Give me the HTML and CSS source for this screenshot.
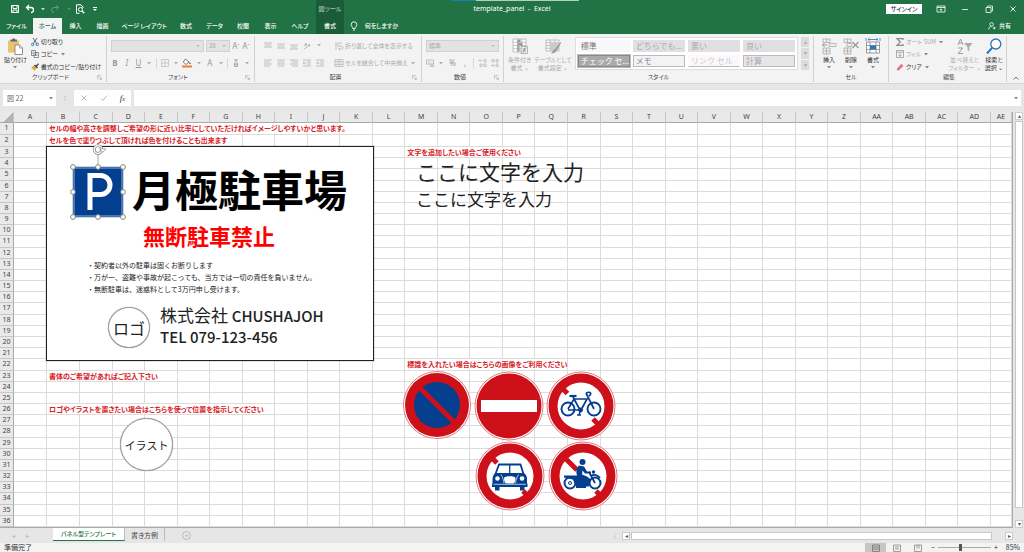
FILE: index.html
```html
<!DOCTYPE html>
<html lang="ja">
<head>
<meta charset="utf-8">
<title>template_panel - Excel</title>
<link rel="stylesheet" href="styles.css">
</head>
<body>
<svg class="defs" aria-hidden="true">
  <symbol id="chev" viewBox="0 0 6 6"><path d="M1 2h4L3 4.500z" fill="currentColor"/></symbol>
  <symbol id="launch" viewBox="0 0 8 8"><path d="M1 6V1h5M3.500 3.500l3 3M7 4v3H4" fill="none" stroke="currentColor" stroke-width=".8"/></symbol>
  <symbol id="al" viewBox="0 0 8 8"><path d="M0 1h8M0 3h6M0 5h8M0 7h6" stroke="currentColor" stroke-width=".8"/></symbol>
  <symbol id="ac" viewBox="0 0 8 8"><path d="M0 1h8M1 3h6M0 5h8M1 7h6" stroke="currentColor" stroke-width=".8"/></symbol>
  <symbol id="ar" viewBox="0 0 8 8"><path d="M0 1h8M2 3h6M0 5h8M2 7h6" stroke="currentColor" stroke-width=".8"/></symbol>
  <symbol id="vt" viewBox="0 0 8 8"><path d="M0 1h8M1 3h6M0 5h8" stroke="currentColor" stroke-width=".8"/></symbol>
  <symbol id="vm" viewBox="0 0 8 8"><path d="M0 2h8M1 4h6M0 6h8" stroke="currentColor" stroke-width=".8"/></symbol>
  <symbol id="vb" viewBox="0 0 8 8"><path d="M0 3h8M1 5h6M0 7h8" stroke="currentColor" stroke-width=".8"/></symbol>
</svg>

<header class="top">
  <div class="titlebar">
    <div class="title-left">
      <div class="qat">
        <button class="ic" aria-label="上書き保存"><svg viewBox="0 0 10 10"><path d="M1.500 1.500h7v7h-7zM3 1.500v3h4v-3M3 8.500v-2.500h4v2.500" fill="none" stroke="#fff"/></svg></button>
        <button class="ic" aria-label="元に戻す"><svg viewBox="0 0 10 10"><path d="M4 1L1.500 3.500 4 6M1.500 3.500H6a2.500 2.500 0 0 1 0 5" fill="none" stroke="#fff" stroke-width="1.300"/></svg></button>
        <svg class="ch pale"><use href="#chev"/></svg>
        <button class="ic faded" aria-label="やり直し"><svg viewBox="0 0 10 10"><path d="M6 1l2.500 2.500L6 6M8.500 3.500H4a2.500 2.500 0 0 0 0 5" fill="none" stroke="#fff"/></svg></button>
        <svg class="ch pale faded"><use href="#chev"/></svg>
        <button class="ic" aria-label="印刷プレビュー"><svg viewBox="0 0 10 10"><path d="M8 4V3L6 .8H1.500v8.500h3" fill="none" stroke="#fff"/><circle cx="5.500" cy="5.500" r="2" fill="none" stroke="#fff"/><path d="M7 7l2.300 2.300" stroke="#fff" stroke-width="1.300"/></svg></button>
        <button class="ic last" aria-label="クイック アクセスのカスタマイズ"><svg viewBox="0 0 10 10"><path d="M3 3.500h4" stroke="#fff"/><path d="M3 5h4L5 7z" fill="#fff"/></svg></button>
      </div>
      <span class="context">図ツール</span>
    </div>
    <h1 class="doc">template_panel&nbsp; -&nbsp; Excel</h1>
    <div class="title-right">
      <button class="signin">サインイン</button>
      <button class="win" aria-label="リボンの表示オプション"><svg viewBox="0 0 10 10"><path d="M1 2h8v6H1zM1 3.500h8M5 7.500V5M3.800 6L5 4.800 6.200 6" fill="none" stroke="#fff" stroke-width=".8"/></svg></button>
      <button class="win" aria-label="最小化"><svg viewBox="0 0 10 10"><path d="M2 5.500h6" stroke="#fff" stroke-width=".8"/></svg></button>
      <button class="win" aria-label="元に戻す (縮小)"><svg viewBox="0 0 10 10"><path d="M2 3.500h5v5H2zM3.500 3.500V2h5v5H7" fill="none" stroke="#fff" stroke-width=".8"/></svg></button>
      <button class="win" aria-label="閉じる"><svg viewBox="0 0 10 10"><path d="M2.500 2.500l5 5M7.500 2.500l-5 5" stroke="#fff" stroke-width=".9"/></svg></button>
    </div>
    <div class="peek"></div>
  </div>
  <nav class="tabs">
    <button>ファイル</button><button class="on">ホーム</button><button>挿入</button><button>描画</button><button>ページ レイアウト</button><button>数式</button><button>データ</button><button>校閲</button><button>表示</button><button>ヘルプ</button><button class="ctx">書式</button>
    <button class="tell"><svg viewBox="0 0 8 10"><path d="M2.800 7.500C2.800 6 1.200 5.500 1.200 3.600a2.800 2.800 0 0 1 5.600 0C6.800 5.500 5.200 6 5.200 7.500zM3 9h2" fill="none" stroke="#fff" stroke-width=".9"/></svg>何をしますか</button>
    <button class="share"><svg viewBox="0 0 10 10"><circle cx="4.500" cy="3" r="2.200" fill="none" stroke="#fff"/><path d="M.8 9.500C1 6.500 2.500 5.500 4.500 5.500M6 7.500h3.500M7.800 5.800v3.500" fill="none" stroke="#fff"/></svg>共有</button>
  </nav>
</header>

<section class="ribbon" aria-label="リボン">
  <div class="group g-clip">
    <div class="gbody">
      <button class="big"><svg viewBox="0 0 16 17"><path d="M1 2.500h11v12H1z" fill="#ecc16f"/><path d="M3.500 3.500v-2h2a1.200 1.200 0 0 1 2.400 0h2v2z" fill="#5d6570"/><path d="M8 7h4.500L15.500 10v6.500H8z" fill="#fff" stroke="#777" stroke-width=".8"/><path d="M12.500 7v3h3" fill="none" stroke="#777" stroke-width=".6"/></svg><span>貼り付け</span><svg class="ch"><use href="#chev"/></svg></button>
      <div class="stack">
        <button><svg viewBox="0 0 8 8"><path d="M2 0l3.600 5.500M6 0L2.400 5.500" stroke="#555" stroke-width=".9"/><circle cx="1.700" cy="6.400" r="1.200" fill="none" stroke="#2b74c0"/><circle cx="6.300" cy="6.400" r="1.200" fill="none" stroke="#2b74c0"/></svg>切り取り</button>
        <button><svg viewBox="0 0 8 8"><path d="M.5 .5h4v5h-4zM3 2.500h4.500v5H3z" fill="#fff" stroke="#666" stroke-width=".7"/><path d="M1.300 2h1.500M1.300 3.500h1M4 4h2.500M4 5.500h2.500" stroke="#2b74c0" stroke-width=".6"/></svg>コピー<svg class="ch"><use href="#chev"/></svg></button>
        <button><svg viewBox="0 0 8 8"><path d="M.2 4.500L3 2.500 5.500 5 3.500 7.800z" fill="#e9a13c"/><path d="M3.500 2l3 3M5 3.500L7.500 .8" stroke="#444" stroke-width="1.300"/></svg>書式のコピー/貼り付け</button>
      </div>
    </div>
    <div class="gfoot"><span>クリップボード</span><button aria-label="クリップボードの詳細"><svg><use href="#launch"/></svg></button></div>
  </div>

  <div class="group g-font off">
    <div class="gbody rows">
      <div class="row">
        <span class="combo wide"><select aria-label="フォント" disabled><option></option></select></span><span class="combo size"><select aria-label="フォント サイズ" disabled><option>28</option></select></span>
        <button class="t" aria-label="フォント サイズの拡大">A<sup>ˆ</sup></button><button class="t" aria-label="フォント サイズの縮小">A<sup>ˇ</sup></button>
      </div>
      <div class="row spread">
        <button class="t"><b>B</b></button><button class="t"><i>I</i></button><button class="t"><u>U</u></button><svg class="ch"><use href="#chev"/></svg><span class="bar"></span>
        <button aria-label="罫線"><svg viewBox="0 0 8 8"><path d="M.5 .5h7v7h-7zM4 .5v7M.5 4h7" fill="none" stroke="#bbb" stroke-width=".7"/></svg></button><svg class="ch dark"><use href="#chev"/></svg>
        <button aria-label="塗りつぶしの色"><svg class="fill" viewBox="0 0 10 10"><path d="M3.500 1L7 4 4 6.500 1.200 4z" fill="#fff" stroke="#555" stroke-width=".8"/><path d="M7.500 3.500l1.500 2.500H7.200z" fill="#2b74c0"/><path d="M0 7.500h10v2H0z" fill="#ee7d31"/></svg></button><svg class="ch dark"><use href="#chev"/></svg>
        <button class="t">A</button><svg class="ch dark"><use href="#chev"/></svg><span class="bar"></span>
        <button aria-label="ふりがな"><svg viewBox="0 0 8 8"><path d="M2 1h4M4 0v3M2.500 4h3v3.500h-3zM2.500 5.700h3" fill="none" stroke="#999" stroke-width=".8"/></svg></button><svg class="ch"><use href="#chev"/></svg>
      </div>
    </div>
    <div class="gfoot"><span>フォント</span><button aria-label="フォントの詳細"><svg><use href="#launch"/></svg></button></div>
  </div>

  <div class="group g-align off">
    <div class="gbody rows">
      <div class="row"><div class="icons"><svg><use href="#vt"/></svg><svg><use href="#vm"/></svg><svg><use href="#vb"/></svg><svg viewBox="0 0 8 8"><path d="M1 7l6-4M5 2.500l2 .3-.7 2" fill="none" stroke="currentColor" stroke-width=".8"/><path d="M1 4l2-3 1 3M1.500 3h2" fill="none" stroke="currentColor" stroke-width=".8"/></svg><svg class="ch"><use href="#chev"/></svg></div>
        <button><svg viewBox="0 0 8 8"><path d="M1 0v8M3 1h4M3 1v3h3.500a1 1 0 0 1 0 3H4M5 5.500L3.500 7 5 8" fill="none" stroke="currentColor" stroke-width=".8"/></svg>折り返して全体を表示する</button></div>
      <div class="row"><div class="icons"><svg><use href="#al"/></svg><svg><use href="#ac"/></svg><svg><use href="#ar"/></svg><svg viewBox="0 0 8 8"><path d="M0 1h8M4 3h4M4 5h4M0 7h8M3 4H0M1.500 2.800L.3 4l1.200 1.200" fill="none" stroke="currentColor" stroke-width=".8"/></svg><svg viewBox="0 0 8 8"><path d="M0 1h8M4 3h4M4 5h4M0 7h8M0 4h3M1.800 2.800L3 4 1.800 5.200" fill="none" stroke="currentColor" stroke-width=".8"/></svg></div>
        <button><svg viewBox="0 0 8 8"><path d="M0 .5h8v7H0zM0 2.500h8M0 5.500h8M4 .5v2M4 5.500v2M1.500 4h5" fill="none" stroke="currentColor" stroke-width=".7"/></svg>セルを結合して中央揃え<svg class="ch"><use href="#chev"/></svg></button></div>
    </div>
    <div class="gfoot"><span>配置</span><button aria-label="配置の詳細"><svg><use href="#launch"/></svg></button></div>
  </div>

  <div class="group g-num off">
    <div class="gbody rows">
      <div class="row"><span class="combo full"><select aria-label="表示形式" disabled><option>標準</option></select></span></div>
      <div class="row spread"><button aria-label="通貨表示形式"><svg viewBox="0 0 8 8"><path d="M.5 1h7v4h-7zM2 3h1M4 2.500v1.500M4 6h4M4 7.500h4" fill="none" stroke="currentColor" stroke-width=".8"/></svg></button><svg class="ch"><use href="#chev"/></svg><button class="t">%</button><button class="t">,</button><span class="bar"></span><button aria-label="小数点以下の表示桁数を増やす"><svg viewBox="0 0 8 8"><path d="M3 1.500H0M1.200 .3L0 1.500l1.200 1.200M5 .5h2v2.500H5zM1 5h2v2.500H1zM5 5h2v2.500H5z" fill="none" stroke="currentColor" stroke-width=".7"/></svg></button><button aria-label="小数点以下の表示桁数を減らす"><svg viewBox="0 0 8 8"><path d="M1 .5h2v2.500H1zM5 .5h2v2.500H5zM0 6.500h3M1.800 5.300L3 6.500 1.800 7.700M5 5h2v2.500H5z" fill="none" stroke="currentColor" stroke-width=".7"/></svg></button></div>
    </div>
    <div class="gfoot"><span>数値</span><button aria-label="数値の詳細"><svg><use href="#launch"/></svg></button></div>
  </div>

  <div class="group g-style off">
    <div class="gbody">
      <button class="big"><svg viewBox="0 0 16 17"><path d="M1 1h13v13H1zM1 4.200h13M1 7.500h13M1 10.800h13M5.300 1v13M9.700 1v13" fill="#fff" stroke="#aaa" stroke-width=".7"/><path d="M5.500 1.500h3v3h-3zM5.500 5h5v2.500h-5zM5.500 8h2v5.500h-2z" fill="#999"/><path d="M9 8.500h6.500v7H9z" fill="#eee" stroke="#999" stroke-width=".7"/><path d="M10.500 11h3.500M10.500 13h3.500M13.500 9.500l-2.500 5" stroke="#888" stroke-width=".8"/></svg><span>条件付き<br>書式 ⌄</span></button>
      <button class="big"><svg viewBox="0 0 16 17"><path d="M1 2h13v11H1zM1 4.800h13M1 7.500h13M1 10.200h13M5.300 2v11M9.700 2v11" fill="#f8f8f8" stroke="#aaa" stroke-width=".7"/><path d="M5.500 5h8v7.500h-8z" fill="#ccc"/><path d="M15.500 4L10 11l-1 .5-3 4c3 0 4.500-1 5.500-3L16 5z" fill="#999"/></svg><span>テーブルとして<br>書式設定 ⌄</span></button>
      <div class="gallery">
        <button class="s-plain">標準</button><button class="s-gray">どちらでも...</button><button class="s-gray">悪い</button><button class="s-gray">良い</button>
        <button class="s-check">チェック セ...</button><button class="s-memo">メモ</button><button class="s-link">リンク セル</button><button class="s-calc">計算</button>
      </div>
      <div class="gscroll"><button aria-label="上へ">▴</button><button aria-label="下へ">▾</button><button aria-label="その他">▾</button></div>
    </div>
    <div class="gfoot"><span>スタイル</span></div>
  </div>

  <div class="group g-cells">
    <div class="gbody">
      <button class="big"><svg viewBox="0 0 16 17"><path d="M2 1h7v3.500H2zM5.500 1v3.500M2 10h7v6H2zM5.500 10v6M2 13h7M8 5.500h7v3H8z" fill="#eee" stroke="#aaa" stroke-width=".8"/><path d="M6 7H1.500M3.500 5L1.500 7l2 2" fill="none" stroke="#999"/></svg><span>挿入</span><svg class="ch"><use href="#chev"/></svg></button>
      <button class="big"><svg viewBox="0 0 16 17"><path d="M1 1h7v3.500H1zM4.500 1v3.500M1 10h7v6H1zM4.500 10v6M1 13h7M4 5.500h5v3H4z" fill="#eee" stroke="#aaa" stroke-width=".8"/><path d="M9.500 4l6 6M15.500 4l-6 6" stroke="#999" stroke-width="1.300"/></svg><span>削除</span><svg class="ch"><use href="#chev"/></svg></button>
      <button class="big"><svg viewBox="0 0 16 17"><path d="M1.500 4h13v11h-13zM1.500 7.500h13M1.500 11.500h13M5 4v11M11 4v11" fill="#fff" stroke="#777" stroke-width=".7"/><path d="M5 7.500h6v4H5z" fill="#2b74c0"/><path d="M3 1.500h10M4.500 .2L3 1.500l1.500 1.300M11.500 .2L13 1.500l-1.500 1.300M1 0v3M15 0v3" fill="none" stroke="#2b74c0" stroke-width=".8"/></svg><span>書式</span><svg class="ch"><use href="#chev"/></svg></button>
    </div>
    <div class="gfoot"><span>セル</span></div>
  </div>

  <div class="group g-edit">
    <div class="gbody">
      <div class="stack">
        <button class="off"><svg viewBox="0 0 8 8"><path d="M7 2V.7H1L4.300 4 1 7.300h6V6" fill="none" stroke="#888" stroke-width="1.200"/></svg>オート SUM<svg class="ch"><use href="#chev"/></svg></button>
        <button class="off"><svg viewBox="0 0 8 8"><path d="M.5 .5h7v7h-7zM.5 2.200h7M4 3v3.500M2.500 5L4 6.500 5.500 5" fill="none" stroke="#999" stroke-width=".8"/></svg>フィル<svg class="ch"><use href="#chev"/></svg></button>
        <button><svg viewBox="0 0 8 8"><path d="M1 5.500L5.500 .8 7.500 3 3 7.300z" fill="#e8728a"/><path d="M1 5.500L3 7.300H1.200z" fill="#b04a62"/></svg>クリア<svg class="ch"><use href="#chev"/></svg></button>
      </div>
      <button class="big off"><svg viewBox="0 0 16 17"><path d="M1 7l2.500-6L6 7M2 5h3M1.200 10h4.500L1.200 15.500h4.800" fill="none" stroke="#999"/><path d="M7 5h8.500L12.300 9v4.500L10.500 12V9z" fill="#aaa"/></svg><span>並べ替えと<br>フィルター ⌄</span></button>
      <button class="big"><svg viewBox="0 0 16 17"><circle cx="9.800" cy="6" r="5" fill="#fff" stroke="#2b74c0" stroke-width="1.300"/><path d="M6.200 9.600L1 15.500" stroke="#2b74c0" stroke-width="2"/></svg><span>検索と<br>選択 ⌄</span></button>
    </div>
    <div class="gfoot"><span>編集</span></div>
  </div>
  <button class="collapse" aria-label="リボンを折りたたむ"><svg viewBox="0 0 8 8"><path d="M1.500 5.500L4 3l2.500 2.500" fill="none" stroke="#777"/></svg></button>
</section>

<section class="formula">
  <span class="namebox"><input aria-label="名前ボックス" value="図 22"><svg class="ch"><use href="#chev"/></svg></span>
  <span class="grip">⋮</span>
  <span class="fx"><button aria-label="キャンセル"><svg viewBox="0 0 8 8"><path d="M1.500 1.500l5 5M6.500 1.500l-5 5" stroke="#bbb"/></svg></button><button aria-label="入力"><svg viewBox="0 0 8 8"><path d="M1 4.500L3 6.500 7 1.500" fill="none" stroke="#bbb"/></svg></button><button aria-label="関数の挿入"><i>f<sub>x</sub></i></button></span>
  <span class="fbox"><input aria-label="数式バー"><svg class="ch"><use href="#chev"/></svg></span>
</section>

<main class="work">
  <div class="sheet">
    <table class="cells" id="cells"></table>
    <div class="canvas">
      <div class="panel">
        <p class="headline">月極駐車場</p>
        <p class="ban">無断駐車禁止</p>
        <ul class="terms"><li>・契約者以外の駐車は固くお断りします</li><li>・万が一、盗難や事故が起こっても、当方では一切の責任を負いません。</li><li>・無断駐車は、迷惑料として3万円申し受けます。</li></ul>
        <span class="ring logo">ロゴ</span>
        <p class="firm">株式会社 <b>CHUSHAJOH</b><br><b>TEL 079-123-456</b></p>
      </div>
      <svg class="parking" viewBox="0 0 60 78">
        <path d="M5 23h50v50H5z" fill="#043e8e" stroke="#8fa9c4" stroke-width="1"/>
        <path d="M6.500 24.500h47v47h-47z" fill="none" stroke="#7f9cc0" stroke-width=".6"/>
        <path d="M22 66V31.500h10.500a9.500 9.500 0 0 1 0 19H22" fill="none" stroke="#fff" stroke-width="5"/>
        <path d="M30 10v13" stroke="#888" stroke-width=".7"/>
        <g fill="#fff" stroke="#777" stroke-width=".9"><circle cx="5" cy="23" r="2.400"/><circle cx="30" cy="23" r="2.400"/><circle cx="55" cy="23" r="2.400"/><circle cx="5" cy="48" r="2.400"/><circle cx="55" cy="48" r="2.400"/><circle cx="5" cy="73" r="2.400"/><circle cx="30" cy="73" r="2.400"/><circle cx="55" cy="73" r="2.400"/></g>
        <circle cx="30" cy="5.500" r="3.800" fill="#fff" stroke="#888" stroke-width="2.800"/><circle cx="30" cy="5.500" r="3.800" fill="none" stroke="#fff" stroke-width="1.300"/><path d="M31.500 4.800h6.500l-3.200 3.500z" fill="#fff" stroke="#888" stroke-width=".7"/>
      </svg>
      <p class="free big-text">ここに文字を入力</p>
      <p class="free mid-text">ここに文字を入力</p>
      <span class="ring illust">イラスト</span>

      <svg class="sign s1" viewBox="0 0 70 70" role="img" aria-label="駐車禁止"><circle cx="35" cy="35" r="33.500" fill="#fff" stroke="#d0454c" stroke-width=".7"/><circle cx="35" cy="35" r="32" fill="#ce101b"/><circle cx="35" cy="35" r="23" fill="#043e8e"/><path d="M18 18l34 34" stroke="#ce101b" stroke-width="5"/></svg>
      <svg class="sign s2" viewBox="0 0 70 70" role="img" aria-label="車両進入禁止"><circle cx="35" cy="35" r="34" fill="#fff" stroke="#d0454c" stroke-width=".7"/><circle cx="35" cy="35" r="32.500" fill="#ce101b"/><path d="M7 29h56v12H7z" fill="#fff"/></svg>
      <svg class="sign s3" viewBox="0 0 70 70" role="img" aria-label="自転車通行止め"><circle cx="35" cy="35" r="34" fill="#fff" stroke="#d0454c" stroke-width=".7"/><circle cx="35" cy="35" r="32.500" fill="#ce101b"/><circle cx="35" cy="35" r="23.500" fill="#fff"/><path d="M16.500 17.500l5 5M47 48l6 6" stroke="#ce101b" stroke-width="5"/>
        <g fill="none" stroke="#043e8e"><circle cx="22" cy="38" r="6.500" stroke-width="1.900"/><circle cx="48" cy="38" r="6.500" stroke-width="1.900"/><path d="M22 38l6-10h13l-6 11M27 26l7 13H22M40 22l8 16M40 22c5-2 6 1 3 3" stroke-width="1.700"/><path d="M23.500 25h7" stroke-width="2.200"/><circle cx="34.500" cy="39" r="2" fill="#043e8e"/><path d="M34.500 39l-1.500 5M31 44h4" stroke-width="1.500"/></g></svg>
      <svg class="sign s4" viewBox="0 0 70 70" role="img" aria-label="自動車通行止め"><circle cx="35" cy="35" r="34" fill="#fff" stroke="#d0454c" stroke-width=".7"/><circle cx="35" cy="35" r="32.500" fill="#ce101b"/><circle cx="35" cy="35" r="23.500" fill="#fff"/><path d="M16 16l6 6M48 50l6 6" stroke="#ce101b" stroke-width="5"/>
        <path d="M24 23.500h21.500l3 9.500H20.500z" fill="#fff" stroke="#043e8e" stroke-width="1.800"/><path d="M34.700 23.500V33" stroke="#043e8e" stroke-width="1.300"/>
        <path d="M20 32.500h29.500c2 1.500 2.500 3.500 2.500 6V44H17.500v-5.500c0-2.500.5-4.500 2.500-6z" fill="#043e8e"/><path d="M29 37c0-2.500 11.500-2.500 11.500 0 0 4-1.500 7-5.700 7s-5.800-3-5.800-7z" fill="#fff"/><path d="M26 33.500c2 3 2.500 6 3 9M43.500 33.500c-2 3-2.500 6-3 9" fill="none" stroke="#fff" stroke-width=".7"/><g fill="#fff"><circle cx="22.500" cy="37.500" r="2.300"/><circle cx="47" cy="37.500" r="2.300"/></g><path d="M17 42.500h35.500v3.500H17zM20 46h4.500v3.500H20zM45 46h4.500v3.500H45z" fill="#043e8e"/><path d="M18.500 43.300h32.500" stroke="#fff" stroke-width=".7"/></svg>
      <svg class="sign s5" viewBox="0 0 70 70" role="img" aria-label="二輪の自動車通行止め"><circle cx="35" cy="35" r="34" fill="#fff" stroke="#d0454c" stroke-width=".7"/><circle cx="35" cy="35" r="32.500" fill="#ce101b"/><circle cx="35" cy="35" r="23.500" fill="#fff"/><path d="M16 16l13 13M48 50l6 6" stroke="#ce101b" stroke-width="5"/>
        <g fill="none" stroke="#043e8e"><circle cx="22" cy="42" r="5.500" stroke-width="2"/><circle cx="22" cy="42" r="1.500"/><circle cx="47" cy="42" r="5.500" stroke-width="2"/><path d="M47 42l-6-11M43 35c3-2 7-1 9 2M28 46h10" stroke-width="1.800"/></g><circle cx="34.500" cy="21" r="3" fill="#043e8e"/><path d="M31 24.500l5 1 3 5h4v2h-6l-2.500-3-.5 4 5 2 4 3-2 7H28l-3-7-9-2v-2h13c-1-4-1-7 2-10z" fill="#043e8e"/><circle cx="45.500" cy="31" r="1.700" fill="#043e8e"/></svg>
    </div>
  </div>
  <div class="vscroll"><button aria-label="上へスクロール">▴</button><span class="thumb"></span><button aria-label="下へスクロール">▾</button></div>
</main>

<footer>
  <div class="sheetbar">
    <div class="nav"><button aria-label="前のシート">◂</button><button aria-label="次のシート">▸</button></div>
    <button class="stab on">パネル型テンプレート</button><button class="stab">書き方例</button>
    <button class="add" aria-label="新しいシート">+</button>
    <div class="hscroll"><span class="grip">⋮</span><button aria-label="左へスクロール">◂</button><span class="thumb"></span><button aria-label="右へスクロール">▸</button></div>
  </div>
  <div class="status">
    <span>準備完了</span>
    <div class="views">
      <button class="on" aria-label="標準"><svg viewBox="0 0 8 8"><path d="M.5 1h7v6.500h-7zM.5 3h7M.5 5h7" fill="none" stroke="#777" stroke-width=".8"/></svg></button>
      <button aria-label="ページ レイアウト"><svg viewBox="0 0 8 8"><path d="M.5 1h7v6.500h-7zM2 3h4M2 5h4" fill="none" stroke="#888" stroke-width=".8"/></svg></button>
      <button aria-label="改ページ プレビュー"><svg viewBox="0 0 8 8"><path d="M.5 1h7v6.500h-7zM3 1v3.500M5 1v3.500" fill="none" stroke="#888" stroke-width=".8"/></svg></button>
      <button class="zb" aria-label="縮小">−</button><input type="range" aria-label="ズーム" min="10" max="160" value="73"><button class="zb" aria-label="拡大">+</button><span class="pct">85%</span>
    </div>
  </div>
</footer>
<script src="sheet.js"></script>
</body>
</html>
```

FILE: sheet.js
```js
const notes = {
  1: { B: 'セルの幅や高さを調整しご希望の形に近い比率にしていただければイメージしやすいかと思います。' },
  2: { B: 'セルを色で塗りつぶして頂ければ色を付けることも出来ます' },
  3: { M: '文字を追加したい場合ご使用ください' },
  22: { M: '標識を入れたい場合はこちらの画像をご利用ください' },
  23: { B: '書体のご希望があればご記入下さい' },
  26: { B: 'ロゴやイラストを置きたい場合はこちらを使って位置を指示してください' }
};
const cols = [...'ABCDEFGHIJKLMNOPQRSTUVWXYZ', 'AA', 'AB', 'AC', 'AD', 'AE'];
const table = document.getElementById('cells');

const head = table.createTHead().insertRow();
head.innerHTML = '<th class="corner"></th>' + cols.map(c => `<th scope="col">${c}</th>`).join('');

const body = table.createTBody();
for (let r = 1; r <= 36; r++) {
  const row = body.insertRow();
  row.innerHTML = `<th scope="row">${r}</th>` + cols.map(c => {
    const text = notes[r] && notes[r][c];
    return text ? `<td><span class="note">${text}</span></td>` : '<td></td>';
  }).join('');
}
```

FILE: styles.css
```css
* { box-sizing: border-box; }
body {
  margin: 0;
  min-height: 100vh;
  display: flex;
  flex-direction: column;
  background: #e6e6e6;
  color: #333;
  font: 6px/8px "Noto Sans CJK JP", "Noto Sans", sans-serif;
  font-feature-settings: "palt";
  overflow: hidden;
}
button, input, select { font: inherit; color: inherit; font-feature-settings: inherit; margin: 0; padding: 0; border: 0; background: none; border-radius: 0; }
button { display: inline-flex; align-items: center; justify-content: center; white-space: nowrap; }
p, h1, ul { margin: 0; padding: 0; list-style: none; }
svg { display: block; width: 8px; height: 8px; flex: none; overflow: visible; }
.defs { position: absolute; width: 0; height: 0; }
svg.ch { width: 6px; height: 6px; color: #888; }
svg.pale { color: #bcd6c7; }
.faded { opacity: .3; }

/* title bar and tabs */
.top { background: #217346; color: #fff; font-weight: 500; }
.titlebar { position: relative; display: grid; grid-template-columns: 1fr auto 1fr; height: 18px; }
.title-left { display: flex; }
.qat { width: 316px; display: flex; align-items: center; padding-left: 10px; gap: 3px; }
.qat .ic svg { width: 10px; height: 10px; }
.qat .ic { margin-right: 2px; }
.qat .faded { margin-left: 1px; }
.qat .last { margin-left: 0; }
.context { width: 28px; background: #1a5c38; color: #a9c9b6; text-align: center; line-height: 17px; white-space: nowrap; }
.doc { font: 7px/17px "Noto Sans", sans-serif; }
.title-right { display: flex; justify-content: flex-end; align-items: center; padding-right: 6px; gap: 14px; }
.title-right svg { width: 10px; height: 10px; }
.signin { background: #fff; color: #333; width: 36px; height: 10px; }
.peek { position: absolute; top: 0; left: 44%; width: 128px; height: 1px; background: linear-gradient(90deg, #1b7fb5 25px, #b5cdbf 25px); }
.tabs { display: grid; grid-template-columns: 33px 29px 27px 27px 56px 28px 29px 28px 27px 32px 28px 60px 1fr; height: 16px; }
.tabs .on { background: #f3f3f3; color: #217346; }
.tabs .ctx { background: #1a5c38; }
.tell { gap: 7px; }
.tell svg { width: 8px; height: 10px; }
.tabs .share { justify-content: flex-end; padding-right: 13px; gap: 3px; }

/* ribbon */
.ribbon { display: flex; height: 50px; background: #f3f3f3; border-bottom: 1px solid #d6d6d6; padding: 2px 0 1px; }
.group { display: flex; flex-direction: column; border-right: 1px solid #d2d2d2; padding: 0 4px; min-width: 0; }
.g-clip { flex: 107 1 107px; } .g-font { flex: 148 1 148px; } .g-align { flex: 167 1 167px; } .g-num { flex: 82 1 82px; }
.g-style { flex: 310 1 310px; } .g-cells { flex: 75 1 75px; } .g-edit { flex: 118 1 118px; }
.group .gbody { flex: 1; display: flex; min-width: 0; min-height: 0; gap: 4px; }
.gfoot { display: flex; height: 10px; align-items: center; color: #444; }
.gfoot span { flex: 1; text-align: center; }
.gfoot svg { width: 5px; height: 5px; color: #888; }
.off .gbody, button.off { color: #aaa; }
.big { flex-direction: column; justify-content: flex-start; flex: none; padding-top: 2px; }
.big > svg:first-child { width: 16px; height: 17px; margin-bottom: 1px; }
.big span { text-align: center; line-height: 8px; }
.stack { display: flex; flex-direction: column; justify-content: space-between; align-items: flex-start; height: 36px; }
.stack button { gap: 2px; height: 11px; }
.rows { flex-direction: column; padding-top: 4px; }
.row { display: flex; align-items: center; height: 12px; gap: 2px; }
.rows .row + .row { height: 14px; }
.spread { justify-content: space-between; }
.combo { position: relative; background: #e3e3e3; border: 1px solid #d0d0d0; height: 12px; display: flex; }
.combo select { appearance: none; width: 100%; padding-left: 2px; opacity: 1; color: #aaa; line-height: 10px; }
.combo::after { content: ""; position: absolute; right: 3px; top: 4px; border: 2px solid transparent; border-top-color: #bbb; }
.wide { flex: 91; } .size { flex: 22; } .full { flex: 1; }
.t { font: 8px/10px "Noto Sans", sans-serif; color: #999; }
.row > .t { min-width: 8px; }
.t sup { font-size: 6px; line-height: 6px; }
.bar { width: 1px; height: 10px; background: #d6d6d6; }
.g-font svg.dark { color: #777; }
svg.fill { width: 10px; height: 10px; }
.g-align .icons { display: flex; width: 74px; padding-left: 5px; gap: 5px; }
.g-align .row button { gap: 2px; }
.g-align .gbody svg, .g-num .gbody svg, .g-font svg.ch { color: #b0b0b0; }
.g-font .gbody { padding-left: 0; }
.g-style .gbody { gap: 3px; }
.gallery { flex: 1; display: grid; grid-template-columns: repeat(4, minmax(0, 1fr)); grid-template-rows: repeat(2, minmax(0, 1fr)); gap: 3px; background: #fff; padding: 2px; margin: 1px 0 2px; border: 1px solid #ddd; }
.gallery button { justify-content: flex-start; padding-left: 2px; font-size: 8px; line-height: 10px; color: #aaa; min-width: 0; min-height: 0; overflow: hidden; border: 1px solid transparent; font-feature-settings: normal; }
.gallery .s-plain { color: #777; background: #faf7fa; }
.gallery .s-gray { background: #e2dfe2; }
.gallery .s-check { background: #aaa; border-color: #888; outline: 1px solid #bbb; color: #fff; }
.gallery .s-memo { background: #f5f2f5; border-color: #bbb; color: #888; }
.gallery .s-link { border-bottom-color: #bbb; color: #ccc; background: #fbf8fb; }
.gallery .s-calc { background: #e8e5e8; border-color: #bbb; }
.gscroll { display: grid; width: 8px; gap: 1px; margin: 1px 0 2px; }
.gscroll button { background: #dcdcdc; color: #aaa; min-height: 0; overflow: hidden; }
.g-cells .gbody { justify-content: space-around; gap: 0; }
.g-edit .gbody { justify-content: space-between; }
.g-edit { padding-left: 7px; }
.collapse { width: 17px; align-items: flex-end; }

/* formula bar */
.formula { display: flex; align-items: center; padding: 6px 3px; height: 28px; }
.namebox, .fx, .fbox { display: flex; align-items: center; height: 16px; background: #fff; }
.namebox { width: 53px; padding: 0 2px 0 4px; }
.namebox input { min-width: 0; flex: 1; font-size: 7px; line-height: 12px; color: #666; }
.formula .grip { width: 18px; text-align: center; color: #999; }
.fx { width: 57px; justify-content: space-around; margin-right: 3px; }
.fx i { font: italic 9px/10px "Liberation Serif", serif; }
.fx sub { font-size: 6px; line-height: 1px; vertical-align: baseline; }
.fbox { flex: 1; padding-right: 2px; }
.fbox input { flex: 1; }

/* worksheet */
.work { flex: 1; display: flex; min-height: 0; }
.sheet { flex: 1; position: relative; overflow: hidden; display: flex; background: #fff; border-bottom: 1px solid #aaa; border-right: 1px solid #aaa; }
.cells { flex: 1; display: grid; grid-template-columns: 14px 33px 33px repeat(28, minmax(0, 1fr)) 21px; grid-template-rows: 11px 12px 12px repeat(34, minmax(0, 1fr)); font-family: "Noto Sans", sans-serif; }
.cells thead, .cells tbody, .cells tr { display: contents; }
.cells th, .cells td { padding: 0; border-right: 1px solid #dcdcdc; border-bottom: 1px solid #dcdcdc; min-width: 0; min-height: 0; white-space: nowrap; }
.cells th { background: #e9e9e9; font-weight: 400; font-size: 7px; line-height: 10px; color: #444; text-align: center; border-color: #c6c6c6; }
.cells .corner { background: linear-gradient(135deg, #e9e9e9 60%, #b4b4b4 60%); }
.cells thead th { border-bottom-color: #aaa; }
.cells tbody th { border-right-color: #aaa; }
.note { position: relative; display: block; width: max-content; background: #fff; color: #d8201f; font: bold 7px/10px "Noto Sans CJK JP", sans-serif; font-feature-settings: "palt"; padding-left: 2px; }
.canvas { position: absolute; left: 14px; top: 11px; }
.panel { position: absolute; left: 32px; top: 23px; width: 328px; height: 215px; background: #fff; border: 1px solid #222; outline: 1px solid #9994; color: #222; white-space: nowrap; }
.headline { position: absolute; left: 85px; top: 10px; font-size: 43px; line-height: 62px; font-weight: bold; color: #000; font-feature-settings: normal; text-shadow: 0 0 1px #9998; }
.ban { position: absolute; left: 96px; top: 72px; font-size: 22px; line-height: 32px; font-weight: bold; color: #f00; font-feature-settings: normal; }
.terms { position: absolute; left: 40px; top: 112px; font-size: 7px; line-height: 12px; font-feature-settings: normal; }
.ring { position: absolute; display: flex; align-items: center; justify-content: center; border: 1px solid #999; border-radius: 50%; background: #fff; color: #222; font-feature-settings: normal; box-shadow: 0 0 1px #888; }
.logo { left: 61px; top: 160px; width: 42px; height: 41px; font-size: 16px; line-height: 24px; }
.firm { position: absolute; left: 113px; top: 158px; font-size: 17px; line-height: 20px; font-feature-settings: normal; }
.firm b { font-size: 15px; font-weight: 500; }
.illust { left: 106px; top: 295px; width: 53px; height: 53px; font-size: 11px; }
.parking { position: absolute; left: 54px; top: 21px; width: 60px; height: 78px; }
.free { position: absolute; left: 402px; white-space: nowrap; color: #222; font-feature-settings: normal; }
.big-text { top: 32px; font-size: 21px; line-height: 32px; }
.mid-text { top: 64px; font-size: 17px; line-height: 24px; }
.sign { position: absolute; width: 70px; height: 70px; }
.s1 { left: 388px; top: 247px; } .s2 { left: 460px; top: 248px; } .s3 { left: 532px; top: 248px; }
.s4 { left: 461px; top: 318px; } .s5 { left: 534px; top: 318px; }
.vscroll { width: 11px; display: flex; flex-direction: column; padding: 0 1px 0 2px; background: #e6e6e6; gap: 1px; }
.vscroll button, .hscroll button { background: #fff; border: 1px solid #ccc; width: 8px; height: 8px; font-size: 6px; line-height: 6px; color: #555; }
.thumb { flex: 1; background: #fff; border: 1px solid #c8c8c8; }
.vscroll .thumb { margin-bottom: 11px; }

/* sheet tabs and status bar */
.sheetbar { display: flex; height: 15px; background: #e6e6e6; }
.nav { display: flex; width: 53px; padding-left: 12px; gap: 11px; color: #bbb; }
.stab { height: 13px; padding: 0 6px; font-size: 7px; color: #444; border-right: 1px solid #bbb; }
.stab.on { width: 72px; background: #fff; color: #217346; border-bottom: 1px solid #217346; font-weight: 500; padding: 0; font-size: 6px; }
.add { width: 9px; height: 9px; margin: 3px 0 0 17px; border: 1px solid #bbb; border-radius: 50%; color: #aaa; line-height: 6px; }
.hscroll { display: flex; align-items: center; width: 401px; margin: 0 11px 0 auto; gap: 1px; }
.hscroll .grip { width: 9px; color: #aaa; }
.hscroll .thumb { height: 8px; margin-right: 12px; }
.status { display: flex; justify-content: space-between; height: 9px; background: #f3f3f3; padding-left: 4px; font-size: 7px; line-height: 9px; white-space: nowrap; }
.views { display: flex; align-items: center; padding-right: 4px; }
.views button { width: 21px; height: 9px; }
.views .on { background: #c6c6c6; }
.views .zb { width: 10px; }
.views input { appearance: none; width: 53px; height: 8px; background: linear-gradient(#aaa, #aaa) center / 100% 1px no-repeat; }
.views input::-webkit-slider-thumb { appearance: none; width: 3px; height: 7px; background: #555; }
.pct { width: 19px; text-align: right; }
```
